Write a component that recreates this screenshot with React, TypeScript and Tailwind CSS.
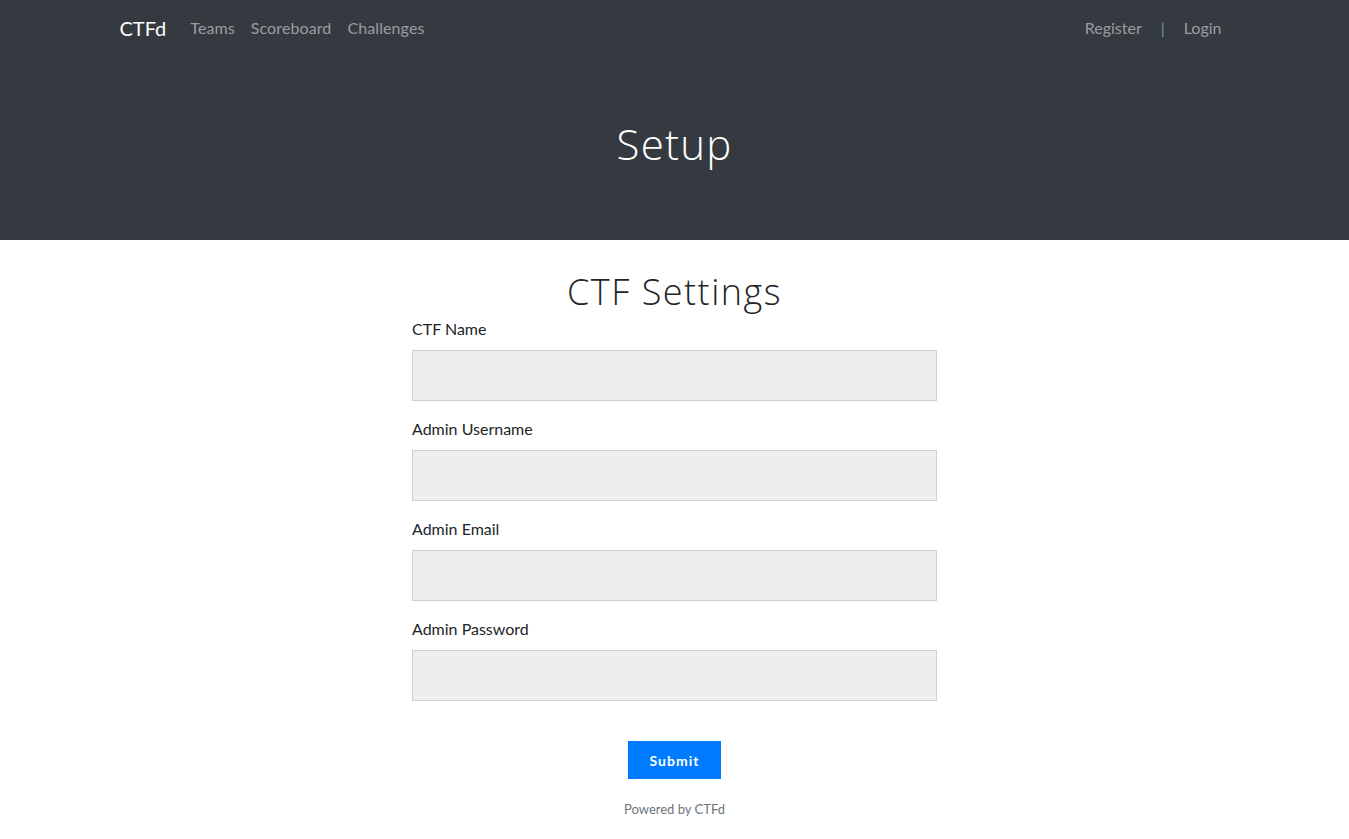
import React from 'react';

const fields = ['CTF Name', 'Admin Username', 'Admin Email', 'Admin Password'];

export default function App() {
  return (
    <div className="min-h-screen bg-white font-['Lato','Liberation_Sans',sans-serif] text-[#212529]">
      {/* navbar */}
      <nav className="bg-[#343a40]">
        <div className="mx-auto flex h-14 w-[1140px] items-center px-[15px]">
          <a className="mr-[24px] text-[20px] text-white">CTFd</a>
          <div className="flex gap-[16px] text-[16px] tracking-[0.1px] text-[#9a9da0]">
            <a>Teams</a>
            <a>Scoreboard</a>
            <a>Challenges</a>
          </div>
          <div className="ml-auto mr-[8px] flex items-center text-[16px] text-[#9a9da0]">
            <a>Register</a>
            <span className="mx-[19px] text-[#6c8fb5]">|</span>
            <a>Login</a>
          </div>
        </div>
      </nav>

      {/* jumbotron */}
      <div className="flex h-[184px] items-center justify-center bg-[#343a40] pb-[10px]">
        <h1 className="font-['Open_Sans',sans-serif] text-[42px] font-light tracking-[1.2px] text-white">Setup</h1>
      </div>

      {/* form */}
      <div className="mx-auto w-[525px] pt-[30px]">
        <h2 className="mb-[4px] text-center font-['Open_Sans',sans-serif] text-[36px] leading-[1.2] font-light tracking-[1.5px] text-[#212529]">
          CTF Settings
        </h2>
        {fields.map((f) => (
          <div key={f} className="mb-[16px]">
            <label className="mb-[9px] block text-[16px] leading-[24px]">{f}</label>
            <input
              type={f === 'Admin Password' ? 'password' : 'text'}
              className="block h-[51px] w-full border border-[#cdd2d7] bg-[#eeeeee] px-3 outline-none"
            />
          </div>
        ))}
        <div className="mt-[40px] flex justify-center">
          <button className="h-[38px] w-[93px] bg-[#007bff] text-[14px] font-bold tracking-[1px] text-white">
            Submit
          </button>
        </div>
        <p className="mt-[21px] text-center text-[13px] text-[#6c757d]">Powered by CTFd</p>
      </div>
    </div>
  );
}
